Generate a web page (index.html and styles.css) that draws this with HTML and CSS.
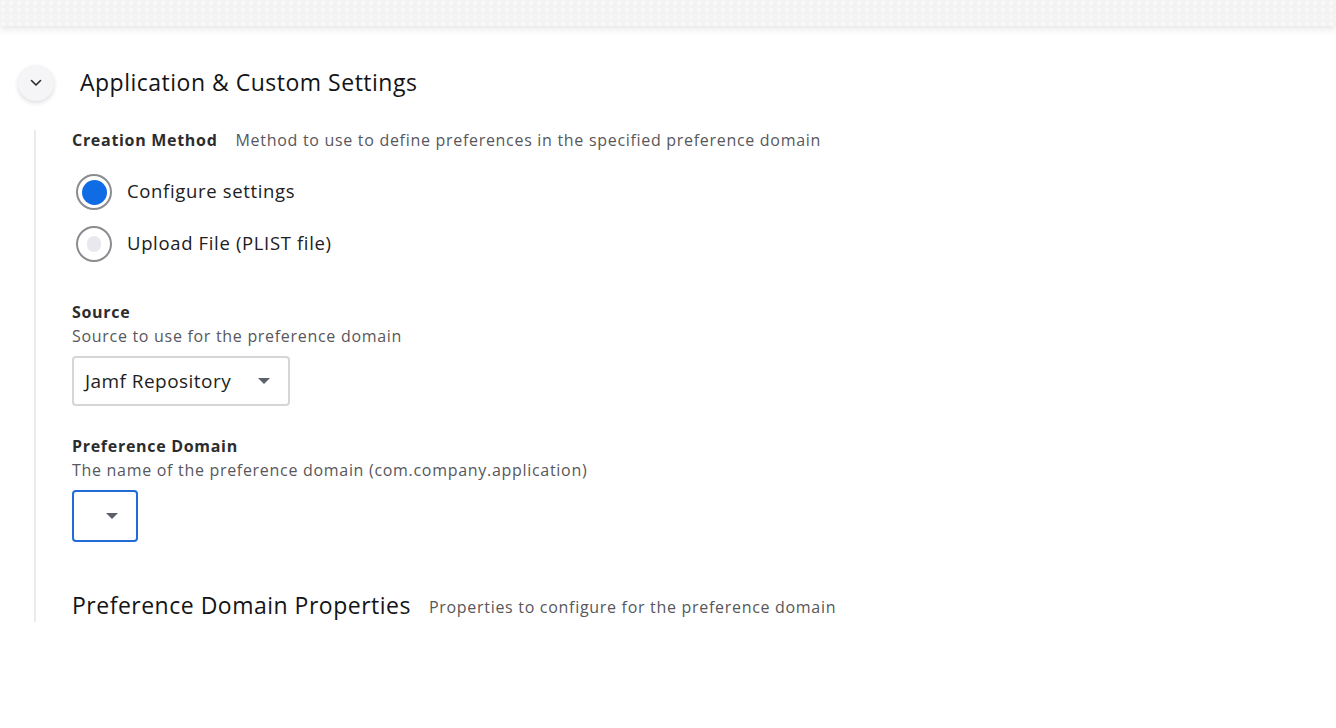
FILE: index.html
```html
<!DOCTYPE html>
<html lang="en">
<head>
<meta charset="utf-8">
<title>Application &amp; Custom Settings</title>
<link rel="stylesheet" href="styles.css">
</head>
<body>
<div class="topband"></div>
<section class="section">
  <div class="section-head">
    <button class="collapse" aria-label="Collapse">
      <svg width="12" height="8" viewBox="0 0 12 8"><path d="M1.5 1.5 L6 6 L10.5 1.5" fill="none" stroke="#2a2a2e" stroke-width="1.6" stroke-linecap="round" stroke-linejoin="round"/></svg>
    </button>
    <h2 class="section-title">Application &amp; Custom Settings</h2>
  </div>
  <div class="section-body">
    <div class="inline-field">
      <span class="label">Creation Method</span>
      <span class="desc">Method to use to define preferences in the specified preference domain</span>
    </div>
    <div class="radios">
      <label class="radio">
        <span class="radio-circle checked"><span class="dot"></span></span>
        <span class="radio-text">Configure settings</span>
      </label>
      <label class="radio">
        <span class="radio-circle hover"><span class="dot"></span></span>
        <span class="radio-text">Upload File (PLIST file)</span>
      </label>
    </div>

    <div class="field field-source">
      <div class="label">Source</div>
      <div class="desc">Source to use for the preference domain</div>
      <div class="select select-source">
        <span class="select-value">Jamf Repository</span>
        <span class="caret"></span>
      </div>
    </div>

    <div class="field field-domain">
      <div class="label">Preference Domain</div>
      <div class="desc">The name of the preference domain (com.company.application)</div>
      <div class="select select-domain">
        <span class="caret"></span>
      </div>
    </div>

    <div class="props">
      <h3 class="props-title">Preference Domain Properties</h3>
      <span class="desc">Properties to configure for the preference domain</span>
    </div>
  </div>
</section>
</body>
</html>
```

FILE: styles.css
```css
* { box-sizing: border-box; }
html, body {
  margin: 0;
  padding: 0;
  background: #ffffff;
  font-family: "Open Sans", "Liberation Sans", sans-serif;
  color: #1c1c1e;
}
.topband {
  height: 26px;
  background-color: #f3f3f4;
  background-image: radial-gradient(circle at 3px 3px, #f8f8f9 2px, transparent 2.5px);
  background-size: 8px 7px;
  box-shadow: 0 3px 7px rgba(40, 48, 60, 0.12);
}
.section { padding-top: 39px; }
.section-head {
  display: flex;
  align-items: center;
  height: 36px;
  padding-left: 18px;
}
.collapse {
  width: 36px;
  height: 36px;
  border: none;
  border-radius: 50%;
  background: #f5f5f8;
  box-shadow: 0 2px 4px rgba(30, 35, 50, 0.16);
  display: flex;
  align-items: center;
  justify-content: center;
  padding: 0;
  margin: 0;
}
.collapse svg { display: block; }
.section-title {
  margin: -3px 0 0 26px;
  font-size: 23px;
  font-weight: 400;
  color: #141416;
  line-height: 30px;
  letter-spacing: 0.5px;
}
.section-body {
  margin: 29px 0 0 34px;
  border-left: 2px solid #ebebee;
  padding-left: 36px;
  padding-bottom: 1px;
}
.label {
  font-size: 16px;
  font-weight: 700;
  color: #2c2c2e;
  letter-spacing: 0.7px;
}
.desc {
  font-size: 16px;
  color: #57575c;
  letter-spacing: 0.7px;
}
.inline-field {
  display: flex;
  align-items: center;
  gap: 18px;
  height: 20px;
  line-height: 20px;
}
.radios {
  margin-top: 24px;
  display: flex;
  flex-direction: column;
  gap: 16px;
}
.radio {
  display: flex;
  align-items: center;
  height: 36px;
  margin-left: 4px;
}
.radio-circle {
  width: 36px;
  height: 36px;
  border-radius: 50%;
  border: 2px solid #8c8c90;
  display: flex;
  align-items: center;
  justify-content: center;
  background: #fff;
  flex: none;
}
.radio-circle.checked .dot {
  width: 25px;
  height: 25px;
  border-radius: 50%;
  background: #0f6ce4;
}
.radio-circle.hover .dot {
  width: 14px;
  height: 16px;
  border-radius: 7px;
  background: #e8e8ee;
}
.radio-text {
  margin-left: 15px;
  margin-top: -3px;
  font-size: 18.5px;
  color: #202022;
  letter-spacing: 0.65px;
}
.field .label, .field .desc { line-height: 24px; height: 24px; }
.field-source { margin-top: 38px; }
.field-domain { margin-top: 28px; }
.select {
  margin-top: 8px;
  border-radius: 4px;
  display: flex;
  align-items: center;
  position: relative;
  background: #fff;
}
.select-source {
  width: 218px;
  height: 50px;
  border: 2px solid #d6d6d8;
  padding-left: 11px;
}
.select-value {
  font-size: 19px;
  color: #1e1e20;
  letter-spacing: 0.45px;
}
.caret {
  width: 0;
  height: 0;
  border-left: 6px solid transparent;
  border-right: 6px solid transparent;
  border-top: 6px solid #5b5f6a;
}
.select-source .caret { margin-left: auto; margin-right: 18px; }
.select-domain {
  width: 66px;
  height: 52px;
  border: 2px solid #236bd6;
  justify-content: flex-end;
  padding-right: 18px;
}
.props {
  margin-top: 49px;
  display: flex;
  align-items: center;
  gap: 18px;
  height: 30px;
}
.props-title {
  margin: -2px 0 0 0;
  font-size: 23px;
  font-weight: 400;
  color: #141416;
  line-height: 30px;
  letter-spacing: 0.5px;
}
.props .desc { margin-top: 2px; }
```
